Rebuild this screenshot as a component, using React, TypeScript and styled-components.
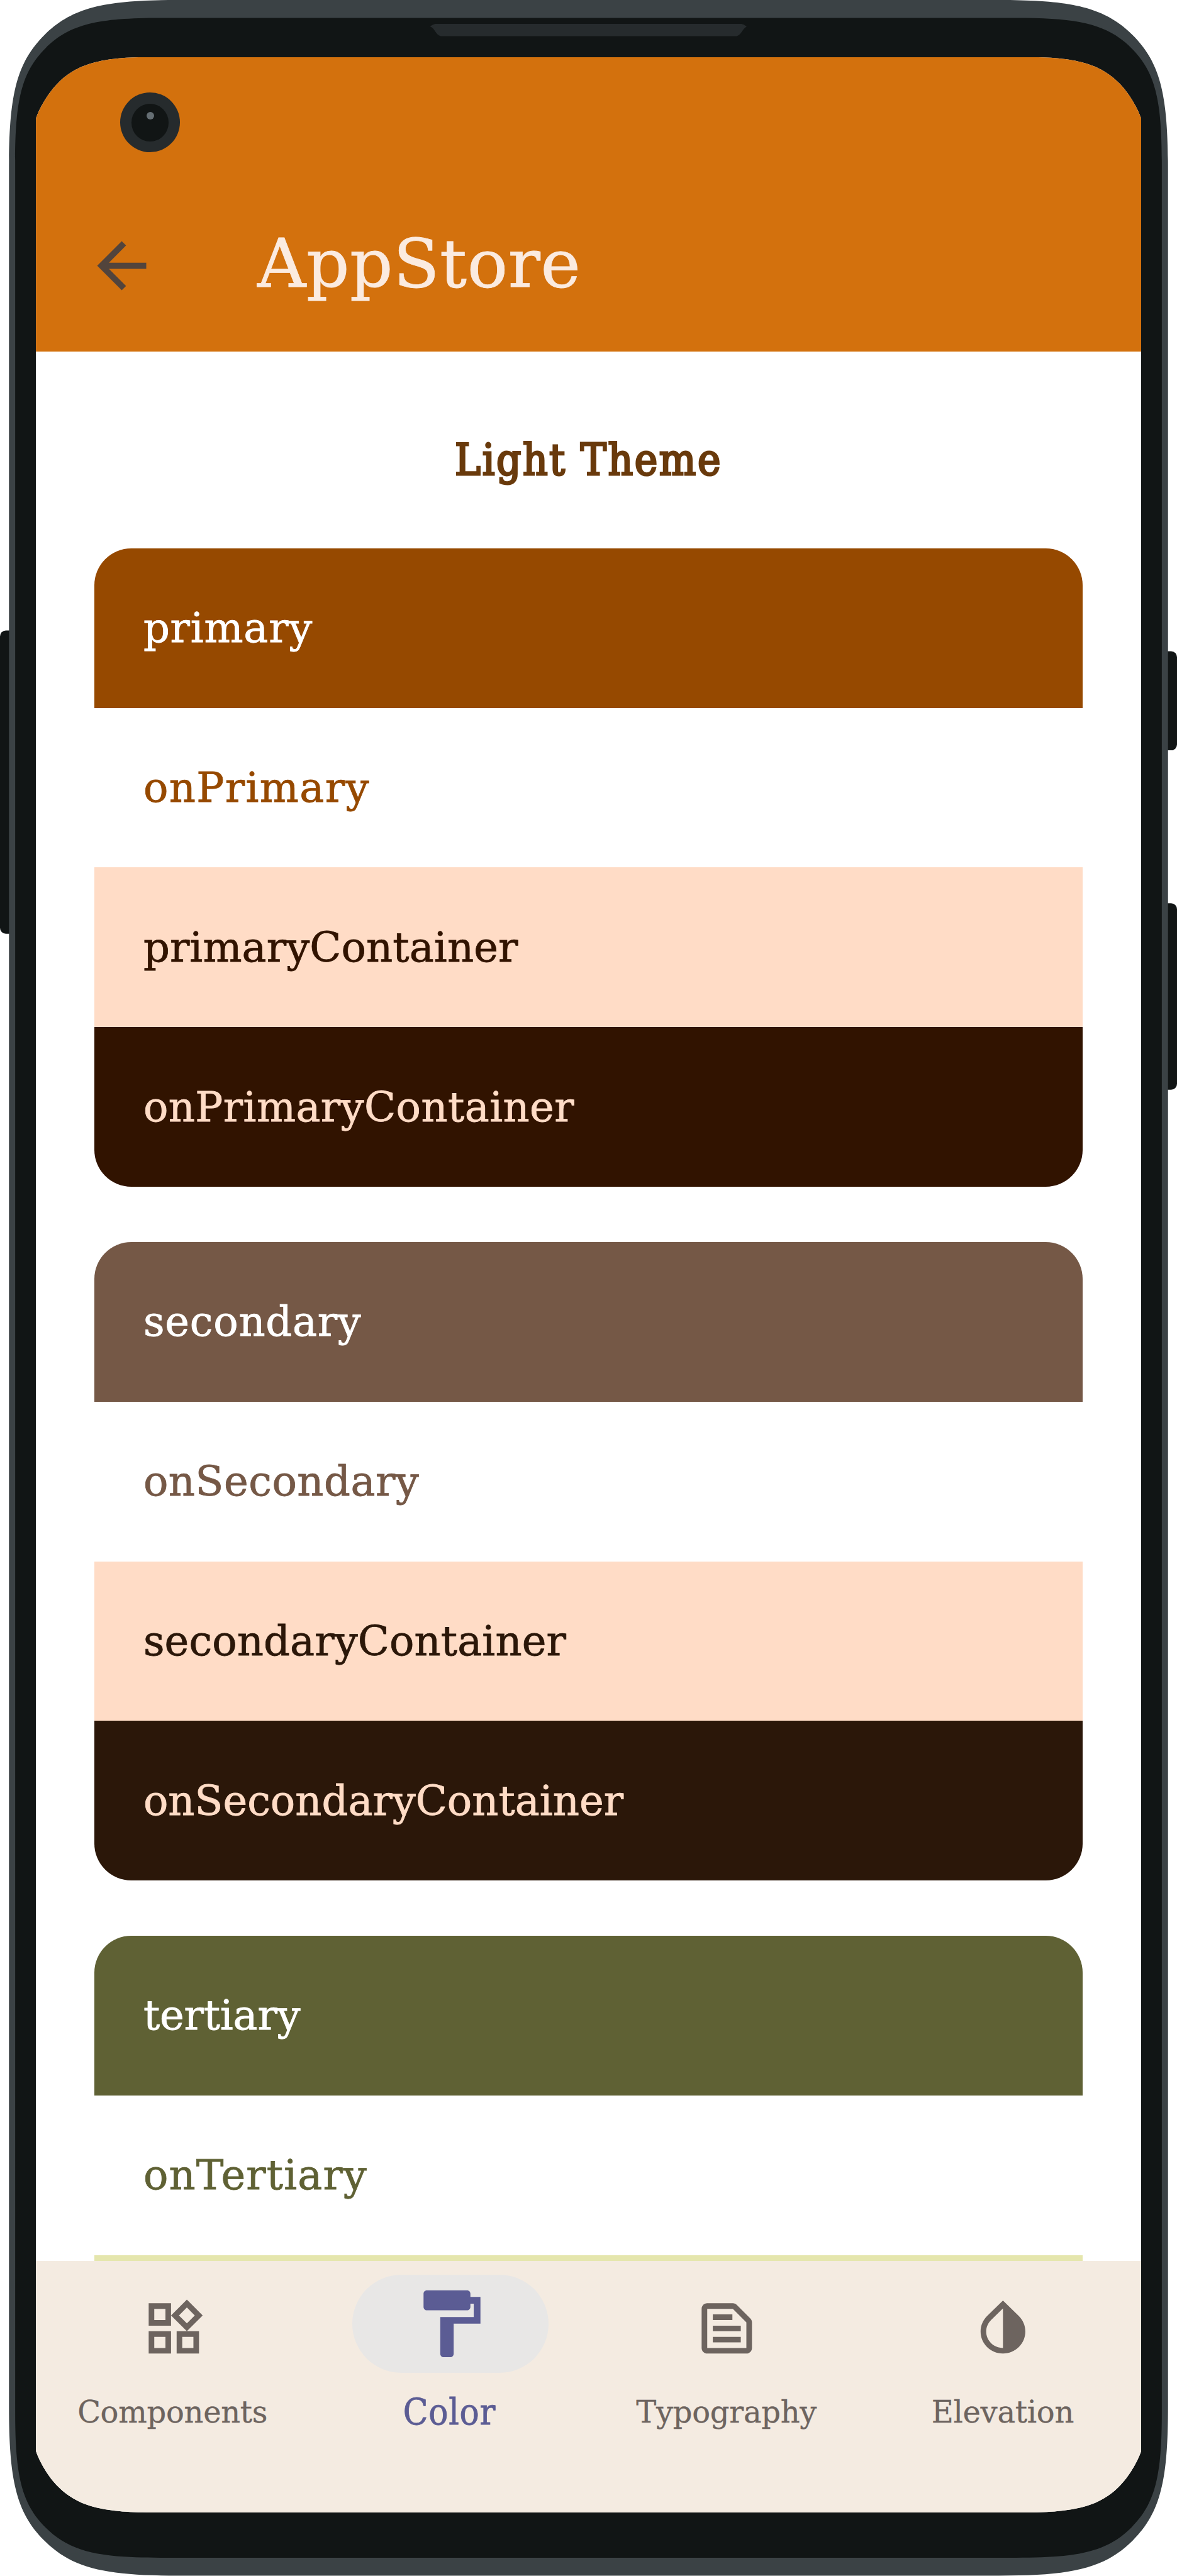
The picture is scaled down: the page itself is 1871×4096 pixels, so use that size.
import React from "react";
import styled, { createGlobalStyle } from "styled-components";

const GlobalStyle = createGlobalStyle`
  *, *::before, *::after { box-sizing: border-box; }
  body { margin: 0; background: #fff; }
`;

const slab = '"DejaVu Serif", "Liberation Serif", serif';
const slabCondensed = '"DejaVu Serif Condensed", "DejaVu Serif", serif';

/* ---------- device outline ---------- */

type Pt = [number, number];

// Corner control points, measured from the corner: side edge first, top edge last.
const shellCorner: Pt[] = [[0, 490], [0, 280], [20, 184], [102, 102], [184, 20], [280, 0], [490, 0]];
const bezelCorner: Pt[] = shellCorner.map(([x, y]) => [x * 0.86, y * 0.86]);
const screenCorner: Pt[] = [[0, 178.5], [9, 150], [36, 103], [64.5, 75], [125, 15], [200, 0], [350, 0]];

function outline(x0: number, y0: number, x1: number, y1: number, corner: Pt[], scale = 1) {
  const place = (fx: boolean, fy: boolean) =>
    corner.map(([dx, dy]) => {
      const x = (fx ? x1 - dx : x0 + dx) * scale;
      const y = (fy ? y1 - dy : y0 + dy) * scale;
      return `${x.toFixed(2)} ${y.toFixed(2)}`;
    });
  const curve = (p: string[]) => `${p[0]} C${p[1]} ${p[2]} ${p[3]} C${p[4]} ${p[5]} ${p[6]}`;
  const tl = place(false, false);
  const tr = place(true, false).reverse();
  const br = place(true, true);
  const bl = place(false, true).reverse();
  return `M${curve(tl)} L${curve(tr)} L${curve(br)} L${curve(bl)} Z`;
}

const Device = styled.main`
  position: relative;
  width: 1871px;
  height: 4096px;
  padding: 90.6px 57px 100.8px 57.1px;
  overflow: hidden;
`;

const Shell = styled.svg`
  position: absolute;
  inset: 0;
  width: 100%;
  height: 100%;
`;

const Screen = styled.section`
  position: relative;
  display: flex;
  flex-direction: column;
  width: 100%;
  height: 3904.6px;
  overflow: hidden;
  background: #fff;
  font-family: ${slab};
  clip-path: path("${outline(0, 0, 3200, 7111.5, screenCorner, 0.54906)}");
`;

/* ---------- header ---------- */

const Header = styled.header`
  flex: none;
  height: 468.7px;
  background: #d3710d;
`;

const StatusBar = styled.div`
  height: 210px;
  padding: 56.7px 0 0 134px;
`;

const Camera = styled.div`
  display: flex;
  justify-content: center;
  width: 95px;
  height: 95px;
  padding-top: 18px;
  border-radius: 50%;
  background: #262b2d;
`;

const Lens = styled.div`
  display: flex;
  justify-content: center;
  width: 59.8px;
  height: 59.8px;
  padding-top: 12.4px;
  border-radius: 50%;
  background: #111515;
`;

const Glint = styled.div`
  width: 12px;
  height: 12px;
  border-radius: 50%;
  background: #656e73;
`;

const AppBar = styled.div`
  display: flex;
  align-items: center;
  gap: 157px;
  height: 244px;
  padding-left: 78px;
`;

const BackButton = styled.button`
  display: block;
  width: 117px;
  height: 117px;
  padding: 0;
  border: 0;
  background: none;
  color: #52443c;
`;

const Title = styled.h1`
  margin: 0;
  padding-bottom: 7px;
  font-size: 107px;
  font-weight: 400;
  line-height: 130px;
  letter-spacing: 0.6px;
  color: #fbebe0;
  -webkit-text-stroke: 0.8px #fbebe0;
`;

/* ---------- palette ---------- */

const Content = styled.div`
  flex: none;
  height: 3035.6px;
  padding: 126.8px 92.8px 0;
  overflow: hidden;
`;

const ThemeTitle = styled.h2`
  margin: 0 0 95.8px;
  font-family: ${slabCondensed};
  font-size: 68.5px;
  font-weight: 400;
  line-height: 90px;
  letter-spacing: 2.6px;
  text-align: center;
  color: #693a0c;
  -webkit-text-stroke: 3px #693a0c;
`;

const Palette = styled.div`
  display: flex;
  flex-direction: column;
  gap: 87.9px;
`;

const Card = styled.div`
  flex: none;
  overflow: hidden;
  border-radius: 58.6px;
`;

const Swatch = styled.div<{ $bg: string; $fg: string; $tracking: number }>`
  display: flex;
  align-items: center;
  height: 253.8px;
  padding: 0 0 1px 78px;
  font-size: 65.5px;
  line-height: 80px;
  white-space: nowrap;
  letter-spacing: ${(p) => p.$tracking}px;
  background: ${(p) => p.$bg};
  color: ${(p) => p.$fg};
  -webkit-text-stroke: 0.8px ${(p) => p.$fg};
`;

/* ---------- navigation ---------- */

const NavBar = styled.nav`
  display: grid;
  flex: 1;
  grid-template-columns: repeat(4, 1fr);
  padding-top: 22px;
  background: #f4ebe1;
`;

const NavItem = styled.a<{ $active?: boolean }>`
  display: flex;
  flex-direction: column;
  align-items: center;
  gap: 32.2px;
  color: ${(p) => (p.$active ? "#5b5c94" : "#6d645f")};
`;

const IconSlot = styled.span<{ $active?: boolean }>`
  display: flex;
  align-items: center;
  justify-content: center;
  width: 312.7px;
  height: 156.3px;
  padding-top: ${(p) => (p.$active ? 0 : 14.6)}px;
  border-radius: 78.2px;
  background: ${(p) => (p.$active ? "#e8e7e6" : "transparent")};
`;

const NavLabel = styled.span<{ $active?: boolean; $nudge?: number }>`
  margin-right: ${(p) => p.$nudge ?? 0}px;
  font-family: ${(p) => (p.$active ? slabCondensed : slab)};
  font-size: ${(p) => (p.$active ? 57.7 : 48)}px;
  letter-spacing: ${(p) => (p.$active ? 0.8 : -0.29)}px;
  line-height: 60px;
  -webkit-text-stroke: ${(p) => (p.$active ? 0.8 : 0.3)}px currentColor;
`;

const Glyph = styled.svg<{ $size: number }>`
  display: block;
  flex: none;
  width: ${(p) => p.$size}px;
  height: ${(p) => p.$size}px;
  fill: currentColor;
`;

const icons = {
  back: "M20 11H7.83l5.59-5.59L12 4l-8 8 8 8 1.41-1.41L7.83 13H20v-2z",
  components:
    "M16.66 4.52l2.83 2.83-2.83 2.83-2.83-2.83 2.83-2.83M9 5v4H5V5h4m10 10v4h-4v-4h4M9 15v4H5v-4h4m7.66-13.31L11 7.34 16.66 13l5.66-5.66-5.66-5.65zM11 3H3v8h8V3zm10 10h-8v8h8v-8zm-10 0H3v8h8v-8z",
  color:
    "M18 4V3c0-.55-.45-1-1-1H5c-.55 0-1 .45-1 1v4c0 .55.45 1 1 1h12c.55 0 1-.45 1-1V6h1v4H9v11c0 .55.45 1 1 1h2c.55 0 1-.45 1-1v-9h8V4h-3z",
  typography:
    "M14.17 5L19 9.83V19H5V5h9.17m0-2H5c-1.1 0-2 .9-2 2v14c0 1.1.9 2 2 2h14c1.1 0 2-.9 2-2V9.83c0-.53-.21-1.04-.59-1.41l-4.83-4.83c-.37-.38-.88-.59-1.41-.59zM7 15h10v2H7v-2zm0-4h10v2H7v-2zm0-4h7v2H7V7z",
  elevation:
    "M12 4.81V19c-3.31 0-6-2.63-6-5.87 0-1.56.62-3.03 1.75-4.14L12 4.81M6.35 7.56C4.9 8.99 4 10.96 4 13.13 4 17.48 7.58 21 12 21s8-3.52 8-7.87c0-2.17-.9-4.14-2.35-5.57L12 2 6.35 7.56z",
};

const Icon = ({ name, size }: { name: keyof typeof icons; size: number }) => (
  <Glyph $size={size} viewBox="0 0 24 24" aria-hidden="true">
    <path d={icons[name]} />
  </Glyph>
);

/* ---------- data ---------- */

type Row = { label: string; bg: string; fg: string; tracking?: number };

const groups: Row[][] = [
  [
    { label: "primary", bg: "#964900", fg: "#ffffff", tracking: 0.79 },
    { label: "onPrimary", bg: "#ffffff", fg: "#964900", tracking: 1.4 },
    { label: "primaryContainer", bg: "#ffdcc6", fg: "#311300", tracking: 0.1 },
    { label: "onPrimaryContainer", bg: "#311300", fg: "#ffdcc6", tracking: 0.41 },
  ],
  [
    { label: "secondary", bg: "#755846", fg: "#ffffff", tracking: 0.75 },
    { label: "onSecondary", bg: "#ffffff", fg: "#755846", tracking: 0.51 },
    { label: "secondaryContainer", bg: "#ffdcc6", fg: "#2b1709", tracking: 0.1 },
    { label: "onSecondaryContainer", bg: "#2b1709", fg: "#ffdcc6" },
  ],
  [
    { label: "tertiary", bg: "#5f6134", fg: "#ffffff", tracking: -0.2 },
    { label: "onTertiary", bg: "#ffffff", fg: "#5f6134", tracking: 1.11 },
    { label: "", bg: "#e5e6ad", fg: "#1c1d00" },
  ],
];

const tabs: { label: string; icon: keyof typeof icons; active?: boolean; nudge?: number }[] = [
  { label: "Components", icon: "components", nudge: 5 },
  { label: "Color", icon: "color", active: true, nudge: 3 },
  { label: "Typography", icon: "typography", nudge: 1 },
  { label: "Elevation", icon: "elevation", nudge: 1 },
];

export default function App() {
  return (
    <>
      <GlobalStyle />
      <Device>
        <Shell viewBox="0 0 3408 7460" preserveAspectRatio="none" aria-hidden="true">
          <rect x="0" y="1826" width="60" height="878" rx="17" fill="#111515" />
          <rect x="3348" y="1886" width="60" height="287" rx="17" fill="#111515" />
          <rect x="3348" y="2616" width="60" height="540" rx="17" fill="#111515" />
          <path d={outline(26, 0, 3382, 7459, shellCorner)} fill="#3b4245" />
          <path d={outline(44, 52, 3364, 7407, bezelCorner)} fill="#111515" />
          <path
            d="M1261 69H2147Q2154 70 2162 77C2149 84 2147 101 2133 104.5H1276C1261 101 1259 81 1245.5 77Q1250 71 1261 69Z"
            fill="#262b2d"
          />
        </Shell>
        <Screen>
          <Header>
            <StatusBar>
              <Camera>
                <Lens>
                  <Glint />
                </Lens>
              </Camera>
            </StatusBar>
            <AppBar>
              <BackButton aria-label="Back">
                <Icon name="back" size={117} />
              </BackButton>
              <Title>AppStore</Title>
            </AppBar>
          </Header>
          <Content>
            <ThemeTitle>Light Theme</ThemeTitle>
            <Palette>
              {groups.map((rows, i) => (
                <Card key={i}>
                  {rows.map((row) => (
                    <Swatch key={row.label} $bg={row.bg} $fg={row.fg} $tracking={row.tracking ?? 0}>
                      {row.label}
                    </Swatch>
                  ))}
                </Card>
              ))}
            </Palette>
          </Content>
          <NavBar>
            {tabs.map((tab) => (
              <NavItem key={tab.label} $active={tab.active}>
                <IconSlot $active={tab.active}>
                  <Icon name={tab.icon} size={tab.active ? 127.7 : 106.7} />
                </IconSlot>
                <NavLabel $active={tab.active} $nudge={tab.nudge}>
                  {tab.label}
                </NavLabel>
              </NavItem>
            ))}
          </NavBar>
        </Screen>
      </Device>
    </>
  );
}
